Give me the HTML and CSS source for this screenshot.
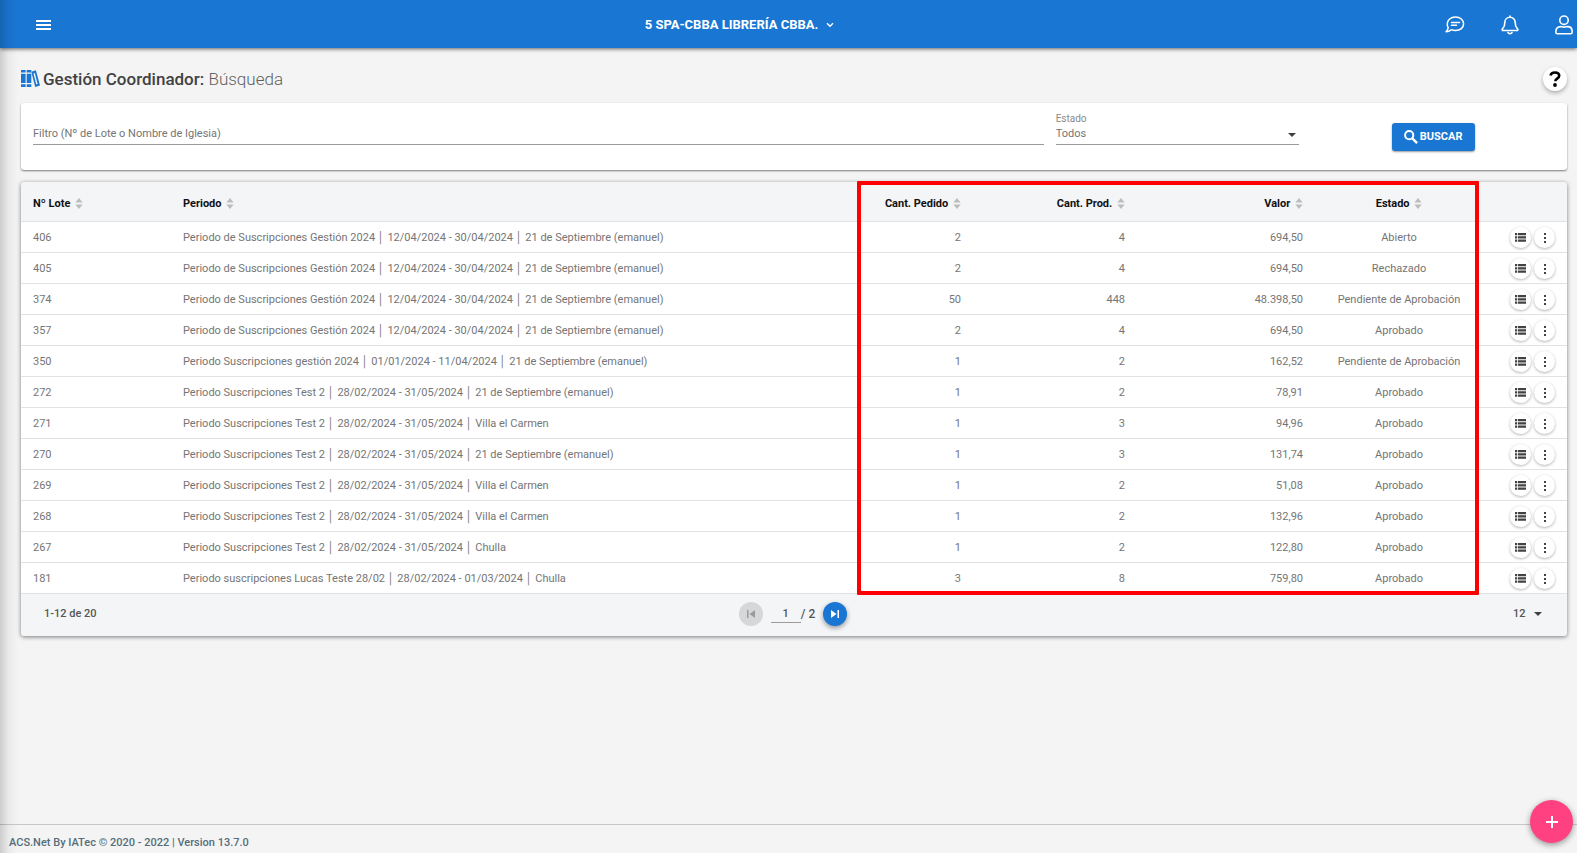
FILE: index.html
```html
<!DOCTYPE html>
<html lang="es">
<head>
<meta charset="utf-8">
<meta name="viewport" content="width=device-width, initial-scale=1">
<title>Gestión Coordinador</title>
<link rel="stylesheet" href="styles.css">
</head>
<body>
<svg class="sprite" aria-hidden="true">
  <symbol id="i-sort" viewBox="0 0 8 12"><path d="M4 0 8 5H0zM4 12 0 7h8z"/></symbol>
  <symbol id="i-list" viewBox="0 0 11 9"><path d="M0 0h2.200v2.300H0zM3 0h8v2.300H3zM0 3.200h2.200v2.300H0zM3 3.200h8v2.300H3zM0 6.400h2.200v2.300H0zM3 6.400h8v2.300H3z"/></symbol>
  <symbol id="i-more" viewBox="0 0 12 12"><path d="M5 1h2v2H5zM5 5h2v2H5zM5 9h2v2H5z"/></symbol>
</svg>

<header class="topbar">
  <button class="icon-btn" aria-label="Menú"><svg width="15" height="11" viewBox="0 0 15 11"><path d="M0 0h15v2H0zM0 4h15v2H0zM0 8h15v2H0z" fill="#fff"/></svg></button>
  <button class="entity">5 SPA-CBBA LIBRERÍA CBBA. <svg width="8" height="6" viewBox="0 0 8 6"><path d="m1 1.2 3 3 3-3" fill="none" stroke="#fff" stroke-width="1.4"/></svg></button>
  <nav class="tools">
    <button class="icon-btn" aria-label="Mensajes"><svg width="20" height="18" viewBox="0 0 20 18" fill="none" stroke="#fff" stroke-width="1.500" stroke-linecap="round" stroke-linejoin="round"><path d="M10.500 1C15.300 1 18.600 4 18.600 7.800S15.300 14.600 10.500 14.600c-1.600 0-3-.3-4.200-.9-1.400 1.300-3 2-5.300 2 1.300-1.100 2-2.500 2.200-4A6.200 6.200 0 0 1 2.300 7.800C2.300 4 5.700 1 10.500 1z"/><path d="M6.500 6.500h8M6.500 9.300h5"/></svg></button>
    <button class="icon-btn" aria-label="Notificaciones"><svg width="18" height="20" viewBox="0 0 18 20" fill="none" stroke="#fff" stroke-width="1.600" stroke-linecap="round" stroke-linejoin="round"><path d="M9 1v1.200M9 2.200c-3 0-5.200 2.300-5.200 5.200 0 4.600-1.500 5.200-2.500 6.600-.4.700 0 1.500.8 1.500h13.800c.8 0 1.200-.8.8-1.500-1-1.400-2.500-2-2.500-6.600 0-2.900-2.200-5.200-5.200-5.200z"/><path d="M7 17.500c.4 1.500 3.600 1.500 4 0"/></svg></button>
    <button class="icon-btn" aria-label="Usuario"><svg width="18" height="20" viewBox="0 0 18 20" fill="none" stroke="#fff" stroke-width="1.600"><circle cx="9" cy="5.200" r="4.200"/><path d="M5.500 11.600c1.200 0 1.900.5 3.500.5s2.300-.5 3.500-.5c2.700 0 4.600 1.900 4.600 4.600v1.200c0 .8-.6 1.300-1.300 1.300H2.200c-.7 0-1.300-.5-1.300-1.300v-1.200c0-2.700 1.900-4.600 4.600-4.600z"/></svg></button>
  </nav>
</header>

<main class="content">
  <div class="heading">
    <svg width="19" height="18" viewBox="0 0 19 18" fill="#1976d2"><path d="M0 0h4.600v2.500H0zM0 3.700h4.600v9.300H0zM0 14.200h4.600V17H0zM5.700 0h4.600v2.500H5.700zM5.700 3.700h4.600V13H5.700zM5.700 14.200h4.600V17H5.700z"/><path d="m10.300 1.700 4.600-1.500L19 15.400l-4.800 1.600zM12.500 3.400l2.700 10.900 1.400-.4-2.800-10.900z" fill-rule="evenodd"/></svg>
    <h1 class="title">Gestión Coordinador: <span class="subtitle">Búsqueda</span></h1>
    <button class="help" aria-label="Ayuda"><svg width="12" height="16" viewBox="0 0 12 16"><path d="M1.500 4.500C2 2.500 3.700 1.500 5.900 1.500c2.600 0 4.300 1.300 4.300 3.300 0 3-3.900 2.700-3.900 5.400" fill="none" stroke="#000" stroke-width="2.600"/><circle cx="6" cy="14" r="1.900"/></svg></button>
  </div>

  <form class="card filters">
    <div class="cell">
      <div class="field">
        <label class="float" for="filtro">Filtro (Nº de Lote o Nombre de Iglesia)</label>
        <input class="control" id="filtro" type="text">
      </div>
    </div>
    <div class="cell">
      <label class="caption" for="estado">Estado</label>
      <div class="field">
        <select class="control" id="estado"><option>Todos</option></select>
        <svg class="caret" width="8" height="4" viewBox="0 0 8 4"><path d="M0 0h8L4 4z"/></svg>
      </div>
    </div>
    <div class="cell action">
      <button class="search" type="button"><svg width="14" height="14" viewBox="0 0 14 14" fill="none" stroke="#fff" stroke-width="2"><circle cx="5.200" cy="5.200" r="4.100"/><path d="m8.300 8.300 4.800 4.800" stroke-width="2.400"/></svg>BUSCAR</button>
    </div>
  </form>

  <section class="card list">
    <table class="grid">
      <colgroup><col class="c-lote"><col><col class="c-num"><col class="c-num"><col class="c-valor"><col class="c-estado"><col class="c-acc"></colgroup>
      <thead><tr>
        <th>Nº Lote <svg class="sort"><use href="#i-sort"/></svg></th>
        <th>Periodo <svg class="sort"><use href="#i-sort"/></svg></th>
        <th class="num">Cant. Pedido <svg class="sort"><use href="#i-sort"/></svg></th>
        <th class="num">Cant. Prod. <svg class="sort"><use href="#i-sort"/></svg></th>
        <th class="num">Valor <svg class="sort"><use href="#i-sort"/></svg></th>
        <th class="mid">Estado <svg class="sort"><use href="#i-sort"/></svg></th>
        <th></th>
      </tr></thead>
      <tbody>
        <tr><td>406</td><td>Periodo de Suscripciones Gestión 2024 │ 12/04/2024 - 30/04/2024 │ 21 de Septiembre (emanuel)</td><td class="num">2</td><td class="num">4</td><td class="num">694,50</td><td class="mid">Abierto</td><td><div class="acts"><button class="round" aria-label="Detalle"><svg width="11" height="9"><use href="#i-list"/></svg></button><button class="round" aria-label="Más"><svg width="12" height="12"><use href="#i-more"/></svg></button></div></td></tr>
        <tr><td>405</td><td>Periodo de Suscripciones Gestión 2024 │ 12/04/2024 - 30/04/2024 │ 21 de Septiembre (emanuel)</td><td class="num">2</td><td class="num">4</td><td class="num">694,50</td><td class="mid">Rechazado</td><td><div class="acts"><button class="round" aria-label="Detalle"><svg width="11" height="9"><use href="#i-list"/></svg></button><button class="round" aria-label="Más"><svg width="12" height="12"><use href="#i-more"/></svg></button></div></td></tr>
        <tr><td>374</td><td>Periodo de Suscripciones Gestión 2024 │ 12/04/2024 - 30/04/2024 │ 21 de Septiembre (emanuel)</td><td class="num">50</td><td class="num">448</td><td class="num">48.398,50</td><td class="mid">Pendiente de Aprobación</td><td><div class="acts"><button class="round" aria-label="Detalle"><svg width="11" height="9"><use href="#i-list"/></svg></button><button class="round" aria-label="Más"><svg width="12" height="12"><use href="#i-more"/></svg></button></div></td></tr>
        <tr><td>357</td><td>Periodo de Suscripciones Gestión 2024 │ 12/04/2024 - 30/04/2024 │ 21 de Septiembre (emanuel)</td><td class="num">2</td><td class="num">4</td><td class="num">694,50</td><td class="mid">Aprobado</td><td><div class="acts"><button class="round" aria-label="Detalle"><svg width="11" height="9"><use href="#i-list"/></svg></button><button class="round" aria-label="Más"><svg width="12" height="12"><use href="#i-more"/></svg></button></div></td></tr>
        <tr><td>350</td><td>Periodo Suscripciones gestión 2024 │ 01/01/2024 - 11/04/2024 │ 21 de Septiembre (emanuel)</td><td class="num">1</td><td class="num">2</td><td class="num">162,52</td><td class="mid">Pendiente de Aprobación</td><td><div class="acts"><button class="round" aria-label="Detalle"><svg width="11" height="9"><use href="#i-list"/></svg></button><button class="round" aria-label="Más"><svg width="12" height="12"><use href="#i-more"/></svg></button></div></td></tr>
        <tr><td>272</td><td>Periodo Suscripciones Test 2 │ 28/02/2024 - 31/05/2024 │ 21 de Septiembre (emanuel)</td><td class="num">1</td><td class="num">2</td><td class="num">78,91</td><td class="mid">Aprobado</td><td><div class="acts"><button class="round" aria-label="Detalle"><svg width="11" height="9"><use href="#i-list"/></svg></button><button class="round" aria-label="Más"><svg width="12" height="12"><use href="#i-more"/></svg></button></div></td></tr>
        <tr><td>271</td><td>Periodo Suscripciones Test 2 │ 28/02/2024 - 31/05/2024 │ Villa el Carmen</td><td class="num">1</td><td class="num">3</td><td class="num">94,96</td><td class="mid">Aprobado</td><td><div class="acts"><button class="round" aria-label="Detalle"><svg width="11" height="9"><use href="#i-list"/></svg></button><button class="round" aria-label="Más"><svg width="12" height="12"><use href="#i-more"/></svg></button></div></td></tr>
        <tr><td>270</td><td>Periodo Suscripciones Test 2 │ 28/02/2024 - 31/05/2024 │ 21 de Septiembre (emanuel)</td><td class="num">1</td><td class="num">3</td><td class="num">131,74</td><td class="mid">Aprobado</td><td><div class="acts"><button class="round" aria-label="Detalle"><svg width="11" height="9"><use href="#i-list"/></svg></button><button class="round" aria-label="Más"><svg width="12" height="12"><use href="#i-more"/></svg></button></div></td></tr>
        <tr><td>269</td><td>Periodo Suscripciones Test 2 │ 28/02/2024 - 31/05/2024 │ Villa el Carmen</td><td class="num">1</td><td class="num">2</td><td class="num">51,08</td><td class="mid">Aprobado</td><td><div class="acts"><button class="round" aria-label="Detalle"><svg width="11" height="9"><use href="#i-list"/></svg></button><button class="round" aria-label="Más"><svg width="12" height="12"><use href="#i-more"/></svg></button></div></td></tr>
        <tr><td>268</td><td>Periodo Suscripciones Test 2 │ 28/02/2024 - 31/05/2024 │ Villa el Carmen</td><td class="num">1</td><td class="num">2</td><td class="num">132,96</td><td class="mid">Aprobado</td><td><div class="acts"><button class="round" aria-label="Detalle"><svg width="11" height="9"><use href="#i-list"/></svg></button><button class="round" aria-label="Más"><svg width="12" height="12"><use href="#i-more"/></svg></button></div></td></tr>
        <tr><td>267</td><td>Periodo Suscripciones Test 2 │ 28/02/2024 - 31/05/2024 │ Chulla</td><td class="num">1</td><td class="num">2</td><td class="num">122,80</td><td class="mid">Aprobado</td><td><div class="acts"><button class="round" aria-label="Detalle"><svg width="11" height="9"><use href="#i-list"/></svg></button><button class="round" aria-label="Más"><svg width="12" height="12"><use href="#i-more"/></svg></button></div></td></tr>
        <tr><td>181</td><td>Periodo suscripciones Lucas Teste 28/02 │ 28/02/2024 - 01/03/2024 │ Chulla</td><td class="num">3</td><td class="num">8</td><td class="num">759,80</td><td class="mid">Aprobado</td><td><div class="acts"><button class="round" aria-label="Detalle"><svg width="11" height="9"><use href="#i-list"/></svg></button><button class="round" aria-label="Más"><svg width="12" height="12"><use href="#i-more"/></svg></button></div></td></tr>
      </tbody>
    </table>
    <div class="highlight"></div>
    <div class="pager">
      <span class="range">1-12 de 20</span>
      <div class="pages">
        <button class="step" disabled aria-label="Primera página"><svg width="8" height="8" viewBox="0 0 8 8"><path d="M0 0h1.500v8H0zM8 0v8L2.500 4z" fill="#9b9b9b"/></svg></button>
        <input class="page" type="text" value="1" aria-label="Página">
        <span class="total">/ 2</span>
        <button class="step next" aria-label="Última página"><svg width="8" height="8" viewBox="0 0 8 8"><path d="M6.500 0H8v8H6.500zM0 0v8l5.500-4z" fill="#fff"/></svg></button>
      </div>
      <div class="size">
        <select class="size-select" aria-label="Filas por página"><option>12</option></select>
        <svg class="caret" width="8" height="4" viewBox="0 0 8 4"><path d="M0 0h8L4 4z"/></svg>
      </div>
    </div>
  </section>
</main>

<footer class="foot">ACS.Net By IATec © 2020 - 2022 | Version 13.7.0</footer>
<button class="fab" aria-label="Agregar"><svg width="12" height="12" viewBox="0 0 12 12"><path d="M5 0h2v5h5v2H7v5H5V7H0V5h5z" fill="#fff"/></svg></button>
<div class="edge"></div>
</body>
</html>
```
FILE: styles.css
```css
* { box-sizing: border-box; }

body {
  margin: 0;
  min-height: 100vh;
  display: flex;
  flex-direction: column;
  position: relative;
  background: #f4f4f4;
  color: #757575;
  font: 11px/16px Roboto, "Liberation Sans", sans-serif;
  overflow-x: hidden;
}

button, input, select {
  font: inherit;
  color: inherit;
  margin: 0;
  padding: 0;
  border: 0;
  border-radius: 0;
  background: none;
}

button { cursor: pointer; }
svg { display: block; flex: none; }
.sprite { position: absolute; width: 0; height: 0; }

.topbar {
  display: grid;
  grid-template-columns: 1fr auto 1fr;
  align-items: center;
  height: 48px;
  padding: 2px 4px 0 36px;
  background: #1976d2;
  box-shadow: 0 1px 4px rgba(0, 0, 0, .6);
}

.icon-btn { display: flex; }

.entity {
  display: flex;
  align-items: center;
  gap: 8px;
  margin-right: 130px;
  color: #fff;
  font-size: 13px;
  font-weight: 700;
}

.tools {
  display: flex;
  justify-content: flex-end;
  align-items: center;
  gap: 36px;
}

.content {
  flex: 1;
  padding: 16px 10px 16px 21px;
}

.heading {
  display: flex;
  align-items: center;
  gap: 3px;
  height: 30px;
}

.title {
  flex: 1;
  margin: 0;
  color: #424242;
  font-size: 17px;
  line-height: 24px;
  font-weight: 500;
}

.subtitle { font-weight: 300; color: #616161; }

.help {
  display: flex;
  align-items: center;
  justify-content: center;
  width: 24px;
  height: 24px;
  border-radius: 50%;
  background: #fff;
  box-shadow: 0 2px 4px rgba(0, 0, 0, .3);
}

.card {
  border-radius: 3px;
  background: #fff;
  box-shadow: 0 1px 2px rgba(0, 0, 0, .5);
}

.filters {
  display: grid;
  grid-template-columns: 8fr 2fr 2fr;
  align-items: start;
  height: 67px;
  margin: 9px 0 12px;
  padding: 10px 6px 0;
}

.cell {
  display: flex;
  flex-direction: column;
  justify-content: flex-end;
  height: 32px;
  padding: 0 6px;
}

.action { align-items: center; justify-content: flex-start; padding-top: 10px; }

.field { display: grid; align-items: center; }
.field > * { grid-area: 1 / 1; }
.float { pointer-events: none; padding-bottom: 2px; }
.caption { font-size: 10px; line-height: 12px; color: #8a8a8a; }

.control {
  width: 100%;
  height: 20px;
  padding-bottom: 2px;
  border-bottom: 1px solid #9a9a9a;
  appearance: none;
  outline: none;
}

.caret { fill: #424242; pointer-events: none; }
.field .caret { justify-self: end; margin-right: 3px; }

.search {
  display: flex;
  align-items: center;
  justify-content: center;
  gap: 2px;
  width: 83px;
  height: 28px;
  flex: none;
  border-radius: 3px;
  background: #1976d2;
  color: #fff;
  font-weight: 700;
  box-shadow: 0 1px 2px rgba(0, 0, 0, .4);
}

.list {
  position: relative;
  background: #f3f5f7;
  box-shadow: 0 1px 4px rgba(0, 0, 0, .5);
}

.grid {
  width: 100%;
  table-layout: fixed;
  border-collapse: separate;
  border-spacing: 0;
}

.c-lote { width: 150px; }
.c-num { width: 164px; }
.c-valor { width: 178px; }
.c-estado { width: 168px; }
.c-acc { width: 84px; }

th, td {
  padding: 1px 12px 0;
  border-bottom: 1px solid #e0e2e4;
  text-align: left;
  white-space: nowrap;
}

th { height: 40px; padding-top: 4px; color: #111; font-weight: 700; }
td { height: 31px; background: #fff; }
.num { text-align: right; }
.mid { text-align: center; }

.sort {
  display: inline-block;
  width: 8px;
  height: 11px;
  margin-left: 2px;
  vertical-align: -2px;
  fill: #bdbdbd;
}

.acts { display: flex; justify-content: flex-end; gap: 3px; }

.round {
  display: flex;
  align-items: center;
  justify-content: center;
  width: 21px;
  height: 21px;
  border-radius: 50%;
  background: #fff;
  fill: #424242;
  box-shadow: 0 1px 3px rgba(0, 0, 0, .3);
}

/* Marks the quantity, value and status columns */
.highlight {
  position: absolute;
  top: -1px;
  right: 88px;
  bottom: 41px;
  width: 622px;
  border: 4px solid #f00;
  border-radius: 1px;
  pointer-events: none;
}

.pager {
  display: grid;
  grid-template-columns: 1fr auto 1fr;
  align-items: center;
  height: 42px;
  padding: 0 25px 2px 23px;
  color: #555;
  font-weight: 500;
}

.pages { display: flex; align-items: center; }

.step {
  display: flex;
  align-items: center;
  justify-content: center;
  width: 24px;
  height: 24px;
  border-radius: 50%;
  background: #d6d7d8;
}

.next {
  margin-left: 8px;
  background: #1976d2;
  box-shadow: 0 2px 5px rgba(0, 0, 0, .4);
}

.page {
  width: 30px;
  height: 18px;
  margin-left: 8px;
  border-bottom: 1px solid #9a9a9a;
  text-align: center;
  outline: none;
}

.total { font-size: 12px; }

.size {
  display: flex;
  align-items: center;
  justify-content: flex-end;
  gap: 8px;
}

.size-select { appearance: none; }

.foot {
  height: 29px;
  padding: 10px 9px 0;
  border-top: 1px solid #c8c8c8;
  color: #546e7a;
  font-weight: 500;
}

.fab {
  position: absolute;
  right: 4px;
  bottom: 10px;
  display: flex;
  align-items: center;
  justify-content: center;
  width: 43px;
  height: 43px;
  border-radius: 50%;
  background: #ff4081;
  box-shadow: 0 2px 6px rgba(0, 0, 0, .4);
}

/* Shadow cast by the collapsed side menu */
.edge {
  position: absolute;
  inset: 0 auto 0 0;
  width: 18px;
  background: linear-gradient(90deg, rgba(0, 0, 0, .16), rgba(0, 0, 0, .04) 50%, transparent);
  pointer-events: none;
}
```
